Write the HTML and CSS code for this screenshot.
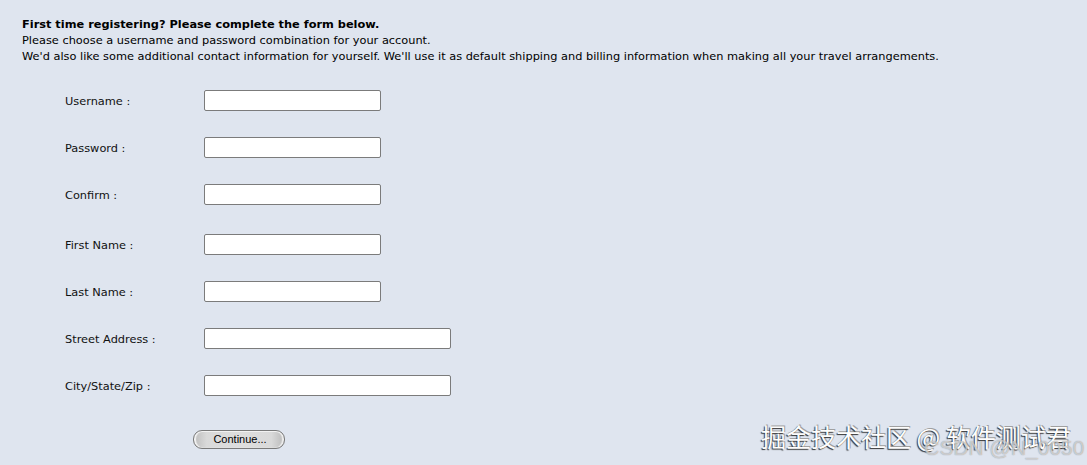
FILE: index.html
```html
<!DOCTYPE html>
<html>
<head>
<meta charset="utf-8">
<link rel="stylesheet" href="styles.css">
</head>
<body>
<div class="page">
  <div class="intro">
    <div class="title">First time registering? Please complete the form below.</div>
    <div>Please choose a username and password combination for your account.</div>
    <div>We'd also like some additional contact information for yourself. We'll use it as default shipping and billing information when making all your travel arrangements.</div>
  </div>
  <form class="form">
    <div class="group">
      <label class="row"><span class="lbl">Username :</span><input class="inp" type="text"></label>
      <label class="row"><span class="lbl">Password :</span><input class="inp" type="password"></label>
      <label class="row"><span class="lbl">Confirm :</span><input class="inp" type="password"></label>
    </div>
    <div class="group">
      <label class="row"><span class="lbl">First Name :</span><input class="inp" type="text"></label>
      <label class="row"><span class="lbl">Last Name :</span><input class="inp" type="text"></label>
      <label class="row"><span class="lbl">Street Address :</span><input class="inp wide" type="text"></label>
      <label class="row"><span class="lbl">City/State/Zip :</span><input class="inp wide" type="text"></label>
    </div>
    <div class="actions"><button class="btn" type="button">Continue...</button></div>
  </form>
</div>
<div class="watermark">
  <span class="wm-main">掘金技术社区 @ 软件测试君</span>
  <span class="wm-sub">CSDN @N_0050</span>
</div>
</body>
</html>
```
FILE: styles.css
```css
html, body {
  margin: 0;
  padding: 0;
  background: #dfe5ef;
  width: 1087px;
  height: 465px;
  overflow: hidden;
}
.page {
  padding: 16px 0 0 22px;
  font-family: "DejaVu Sans", Verdana, sans-serif;
  font-size: 11.35px;
  color: #000;
}
.intro {
  line-height: 16px;
}
.title {
  font-weight: bold;
}
.form {
  margin: 26px 0 0 43px;
}
.group {
  display: flex;
  flex-direction: column;
  gap: 26px;
}
.group + .group {
  margin-top: 29px;
}
.row {
  display: flex;
  align-items: center;
  height: 21px;
}
.lbl {
  width: 139px;
  color: #111;
  padding-top: 1px;
}
.inp {
  box-sizing: border-box;
  width: 177px;
  height: 21px;
  margin: 0;
  border: 1px solid #7b7b7b;
  border-radius: 2px;
  background: #fff;
  padding: 0 3px;
}
.inp.wide {
  width: 247px;
}
.actions {
  margin: 34px 0 0 128px;
}
.btn {
  box-sizing: border-box;
  width: 92px;
  height: 19px;
  padding: 0 0 0 2px;
  border: 1px solid #7a7a7a;
  border-radius: 9px;
  background: linear-gradient(to right, #bdbdbd 0%, #d9d9d9 14%, #dedede 50%, #d9d9d9 86%, #bababa 100%);
  box-shadow: inset 0 1px 0 #f2f2f2, inset 2px 0 1px #f4f4f4, inset -2px 0 1px #eeeeee;
  font-family: "Liberation Sans", Arial, sans-serif;
  font-size: 11px;
  color: #000;
  line-height: 17px;
}
.watermark {
  position: absolute;
  left: 761px;
  top: 419px;
  width: 326px;
  height: 46px;
}
.wm-main {
  position: absolute;
  left: 0;
  top: 0;
  font-family: "Noto Sans CJK SC", sans-serif;
  font-size: 25px;
  line-height: 34px;
  color: #fdfdfd;
  text-shadow: -1px 1px 1px #333, 1px -1px 0 #a0a0a0;
  white-space: nowrap;
}
.wm-sub {
  position: absolute;
  left: 163px;
  top: 16px;
  font-family: "Liberation Sans", Arial, sans-serif;
  font-size: 21px;
  line-height: 26px;
  color: rgba(255, 255, 255, 0.55);
  text-shadow: 0 0 1px rgba(90, 90, 90, 0.7);
  white-space: nowrap;
}
```
